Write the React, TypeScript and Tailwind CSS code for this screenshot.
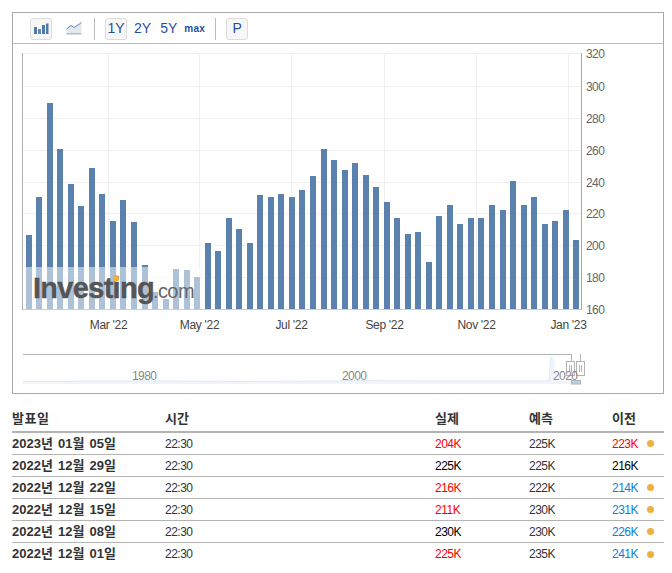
const bars: [number, number][] = [
  [26, 235], [36, 197], [47, 103], [57, 149], [68, 184], [78, 206], [89, 168], [99, 194], [110, 221], [120, 200],
  [131, 222], [142, 265], [152, 292], [163, 299], [173, 269], [184, 270], [194, 277], [205, 243], [215, 251], [226, 218],
  [236, 229], [247, 243], [257, 195], [268, 197], [278, 194], [289, 197], [299, 190], [310, 176], [321, 149], [331, 160],
  [342, 170], [352, 163], [363, 175], [373, 187], [384, 202], [394, 218], [405, 234], [415, 232], [426, 262], [436, 216],
  [447, 205], [457, 224], [468, 218], [478, 218], [489, 205], [500, 210], [510, 181], [521, 205], [531, 197], [542, 224],
  [552, 221], [563, 210], [573, 240],
];

const yTicks: [string, number][] = [
  ['320', 53], ['300', 86], ['280', 118], ['260', 150], ['240', 182], ['220', 213], ['200', 245], ['180', 277], ['160', 309],
];

const xTicks: [string, number][] = [
  ["Mar '22", 108], ["May '22", 199], ["Jul '22", 291], ["Sep '22", 384], ["Nov '22", 476], ["Jan '23", 568],
];

const rows = [
  { date: '2023년 01월 05일', actual: '204K', actualColor: 'text-[#ff0000]', forecast: '225K', prev: '223K', prevColor: 'text-[#ff0000]', dot: true },
  { date: '2022년 12월 29일', actual: '225K', actualColor: 'text-black', forecast: '225K', prev: '216K', prevColor: 'text-black', dot: false },
  { date: '2022년 12월 22일', actual: '216K', actualColor: 'text-[#ff0000]', forecast: '222K', prev: '214K', prevColor: 'text-[#0a7fd6]', dot: true },
  { date: '2022년 12월 15일', actual: '211K', actualColor: 'text-[#ff0000]', forecast: '230K', prev: '231K', prevColor: 'text-[#0a7fd6]', dot: true },
  { date: '2022년 12월 08일', actual: '230K', actualColor: 'text-black', forecast: '230K', prev: '226K', prevColor: 'text-[#0a7fd6]', dot: true },
  { date: '2022년 12월 01일', actual: '225K', actualColor: 'text-[#ff0000]', forecast: '235K', prev: '241K', prevColor: 'text-[#0a7fd6]', dot: true },
];

const columns = 'grid grid-cols-[153px_270px_94px_83px_1fr]';

function Toolbar() {
  const btn = 'flex h-[22px] w-[22px] items-center justify-center rounded-[3px] border border-[#dcdcdc] bg-[#f7f7f7]';
  return (
    <div className="flex h-[31px] items-center border-b border-[#bbbbbb] pl-[17px] pt-[1px] [font-family:Liberation_Sans,sans-serif] text-[14px] text-[#1f4f9f]">
      <div className={btn}>
        <svg width="16" height="12" viewBox="0 0 16 12">
          <rect x="1" y="4" width="3" height="7" fill="#4f79ab" />
          <rect x="5" y="6" width="3" height="5" fill="#5f86b4" />
          <rect x="9" y="2" width="3" height="9" fill="#4f79ab" />
          <rect x="13" y="0.5" width="2.5" height="10.5" fill="#4f79ab" />
        </svg>
      </div>
      <svg className="ml-[14px]" width="16" height="13" viewBox="0 0 16 13">
        <path d="M0.5 7 L5 3.5 L8 5.5 L12 3 L15.5 0.5 V12.5 H0.5 Z" fill="#e3e8f0" />
        <path d="M0.5 7 L5 3.5 L8 5.5 L12 3 L15.5 0.5" fill="none" stroke="#5f86b4" strokeWidth="1" />
        <rect x="0.5" y="11" width="15" height="1.5" fill="#b4c2d6" />
      </svg>
      <div className="ml-[12px] h-[22px] w-px bg-[#bbbbbb]" />
      <div className={`${btn} ml-[10px]`}>1Y</div>
      <span className="ml-[7px]">2Y</span>
      <span className="ml-[9px]">5Y</span>
      <span className="ml-[7px] text-[10px] font-bold tracking-[0.3px]">max</span>
      <div className="ml-[10px] h-[22px] w-px bg-[#bbbbbb]" />
      <div className={`${btn} ml-[10px]`}>P</div>
    </div>
  );
}

function Chart() {
  return (
    <svg width="650" height="349" viewBox="13 44 650 349" className="block [font-family:Liberation_Sans,sans-serif]">
      {yTicks.map(([, y]) => (
        <rect key={y} x="23" y={y} width="558" height="1" fill="#f0f0f0" />
      ))}
      {xTicks.map(([, x]) => (
        <rect key={x} x={x} y="53" width="1" height="256" fill="#f0f0f0" />
      ))}
      {bars.map(([x, top]) => (
        <rect key={x} x={x} y={top} width="6" height={309 - top} fill="#5b82ae" />
      ))}
      <rect x="23" y="267" width="182" height="42" fill="#ffffff" fillOpacity="0.5" />
      <text x="33" y="298" fontSize="29" fontWeight="700" fill="#555555" stroke="#555555" strokeWidth="0.4" letterSpacing="-0.7">Investing</text>
      <text x="153" y="298" fontSize="20" fill="#666666" letterSpacing="-0.6">.com</text>
      <rect x="113" y="276" width="6" height="5" rx="1.5" fill="#f0b040" />
      <rect x="22" y="53" width="1" height="257" fill="#b0b0b0" />
      <rect x="581" y="53" width="1" height="257" fill="#a8a8a8" />
      <rect x="23" y="309" width="558" height="1" fill="#c0d0e0" />
      {yTicks.map(([label, y]) => (
        <text key={label} x="586" y={y + 5} fontSize="12" letterSpacing="-0.6" fill="#666666">{label}</text>
      ))}
      {xTicks.map(([label, x]) => (
        <text key={label} x={x + 0.5} y="329" fontSize="12" letterSpacing="-0.3" textAnchor="middle" fill="#444444">{label}</text>
      ))}

      {/* navigator */}
      <path d="M23 381.5 L70 381.5 L77 381 L130 381 L160 381 L250 381.5 L335 381 L350 380.5 L430 381 L500 381 L549 381 L551 357 L554 357 L556 381 L571 381 V384 H23 Z" fill="#f1f5fa" />
      <path d="M23 381.5 L70 381.5 L77 381 L130 381 L160 381 L250 381.5 L335 381 L350 380.5 L430 381 L500 381 L549 381 L551 357" fill="none" stroke="#dfe9f4" />
      <rect x="23" y="354" width="548" height="1" fill="#b4b4b4" />
      <rect x="571" y="354" width="1" height="8" fill="#b4b4b4" />
      <rect x="580" y="354" width="1" height="8" fill="#b4b4b4" />
      <rect x="571.5" y="380.5" width="9" height="3.5" fill="#b6d3ec" stroke="#b4b4b4" />
      <rect x="566.5" y="361.5" width="8" height="14" fill="none" stroke="#b4b4b4" />
      <path d="M569.5 365 V372 M571.5 365 V372" stroke="#b4b4b4" />
      <rect x="576.5" y="361.5" width="8" height="14" fill="#ffffff" stroke="#b4b4b4" />
      <path d="M579.5 365 V372 M581.5 365 V372" stroke="#b4b4b4" />
      <text x="132" y="380" fontSize="12" letterSpacing="-0.6" fill="#888888">1980</text>
      <text x="342" y="380" fontSize="12" letterSpacing="-0.6" fill="#888888">2000</text>
      <text x="553" y="380" fontSize="12" letterSpacing="-0.6" fill="#888888">2020</text>
    </svg>
  );
}

export default function App() {
  return (
    <div className="h-[573px] w-[672px] overflow-hidden bg-white pl-3 pt-3 [font-family:Liberation_Sans,Noto_Sans_CJK_KR,sans-serif]">
      <div className="h-[382px] w-[652px] border border-[#aaaaaa]">
        <Toolbar />
        <Chart />
      </div>
      <div className="w-[652px]">
        <div className={`${columns} h-[39px] items-end border-b-2 border-[#b4b4b4] pb-[3px] text-[13px] leading-[18px] font-bold text-[#333333]`}>
          <span className="tracking-[0.5px]">발표일</span>
          <span>시간</span>
          <span>실제</span>
          <span>예측</span>
          <span>이전</span>
        </div>
        {rows.map((r, i) => (
          <div key={r.date} className={`${columns} h-[22px] items-center text-[12px] tracking-[-0.5px] ${i < rows.length - 1 ? 'border-b border-[#b4b4b4]' : ''}`}>
            <span className="text-[13px] font-bold tracking-normal text-[#333333] [word-spacing:1.5px]">{r.date}</span>
            <span className="text-[#333333]">22:30</span>
            <span className={r.actualColor}>{r.actual}</span>
            <span className="text-[#333333]">{r.forecast}</span>
            <span className={`flex items-center ${r.prevColor}`}>
              <span className="w-[35px]">{r.prev}</span>
              {r.dot && <span className="h-[7px] w-[7px] rounded-full bg-[#f0b040]" />}
            </span>
          </div>
        ))}
      </div>
    </div>
  );
}
